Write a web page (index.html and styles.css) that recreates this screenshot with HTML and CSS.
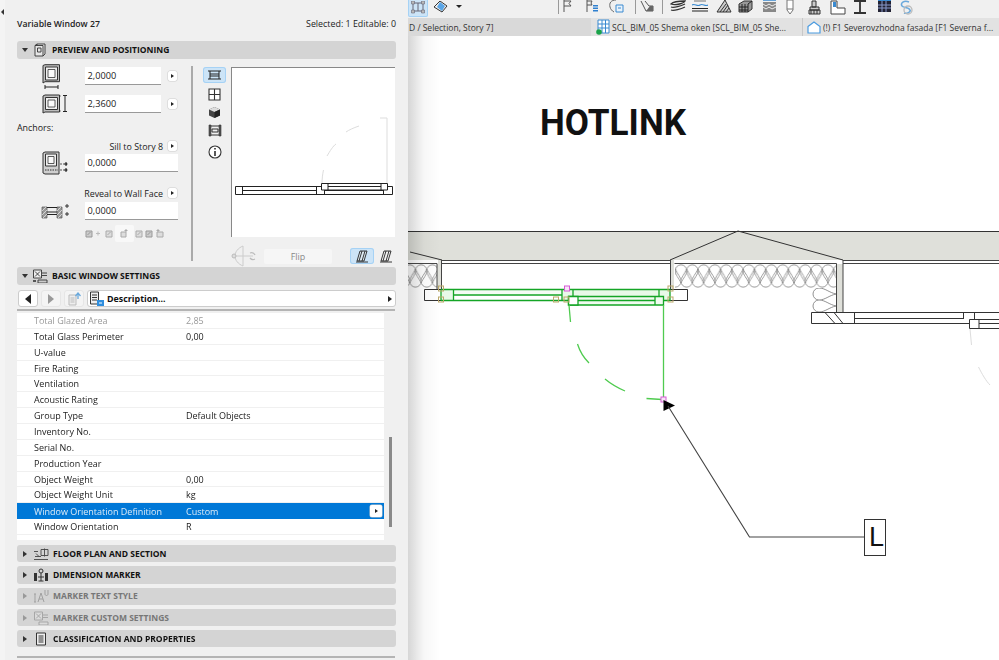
FILE: index.html
```html
<!DOCTYPE html>
<html lang="en">
<head>
<meta charset="utf-8">
<title>Variable Window 27</title>
<link rel="stylesheet" href="styles.css">
</head>
<body>
<div class="app">
  <aside class="panel">
    <div class="grip"><span class="grip-arrow"></span></div>
    <div class="panel-body">
      <header class="head"><span class="head-title">Variable Window 27</span><span>Selected: 1 Editable: 0</span></header>

      <div class="bar"><span class="tri-down"></span>
        <svg class="bar-icon" viewBox="0 0 14 14"><path d="M2 2.500 4 1h8v10l-2 2H2z M4 1v1.500M2 2.500h8V13M4.500 5h3.500v4H4.500z" fill="#e6e6e6" stroke="#333" stroke-width=".9"/></svg>
        <span class="bar-t">PREVIEW AND POSITIONING</span></div>

      <section class="pos">
        <div class="pos-left">
          <div class="row row-1">
            <div class="ico-cell"><svg width="19" height="25" viewBox="0 0 19 25"><path d="M1 1.500 3 .7h14.500v17H3L1 19z" fill="#bdbdbd" stroke="#333"/><path d="M3.500 3h12v13h-12z" fill="#f0f0f0" stroke="#333"/><path d="M6 5.500h7v8H6z" fill="#fafafa" stroke="#333" stroke-width=".8"/><path d="M3 23h13M3 21v4M16 21v4" stroke="#222" fill="none"/></svg></div>
            <div class="field narrow">2,0000</div><span class="arrow-btn"></span>
          </div>
          <div class="row row-2">
            <div class="ico-cell"><svg width="26" height="20" viewBox="0 0 26 20"><path d="M1 2 3 1h14.500v17H3l-2 1z" fill="#bdbdbd" stroke="#333"/><path d="M3.500 3.500h12v12h-12z" fill="#f0f0f0" stroke="#333"/><path d="M6 6h7v7H6z" fill="#fafafa" stroke="#333" stroke-width=".8"/><path d="M18 2h2M18 17h2" stroke="#888" stroke-dasharray="1 1"/><path d="M21 1.500h4M21 17.500h4M23 2v15" stroke="#222" fill="none"/></svg></div>
            <div class="field narrow">2,3600</div><span class="arrow-btn"></span>
          </div>
          <div class="anchors">Anchors:</div>
          <div class="lbl-row lbl-1"><span>Sill to Story 8</span><span class="arrow-btn"></span></div>
          <div class="row row-3">
            <div class="ico-cell"><svg width="27" height="24" viewBox="0 0 27 24"><path d="M1 2 3 1h14v22H3l-2-1z" fill="#cfcfcf" stroke="#333"/><path d="M3.500 3h11v12h-11z" fill="#f0f0f0" stroke="#333"/><path d="M6 5.500h6v7H6z" fill="#fafafa" stroke="#333" stroke-width=".8"/><path d="M3 19h13" stroke="#333" stroke-dasharray="1.500 1" fill="none"/><path d="M18 13h7M18 19h7" stroke="#555" stroke-dasharray="2 1"/><path d="M24 11v4M24 17v4M22.500 13h3M22.500 19h3" stroke="#111"/></svg></div>
            <div class="field">0,0000</div>
          </div>
          <div class="lbl-row lbl-2"><span>Reveal to Wall Face</span><span class="arrow-btn"></span></div>
          <div class="row row-4">
            <div class="ico-cell cell-wall"><svg width="28" height="16" viewBox="0 0 28 16"><path d="M1 4h5v11H1zM16 4h5v11h-5z" fill="#999" stroke="#555" stroke-width=".7"/><path d="M1 8l4-4M1 12l5-5M2 15l4-4M16 8l4-4M16 12l5-5M17 15l4-4" stroke="#eee" stroke-width=".7"/><path d="M6 4.500h10M6 11.500h10M6 9h10" stroke="#222" fill="none"/><path d="M26 1v4M24 3h4M26 9v4M24 11h4" stroke="#222" stroke-width=".9"/></svg></div>
            <div class="field">0,0000</div>
          </div>
          <div class="mini-row">
            <svg class="mini" viewBox="0 0 9 9"><path d="M1 2h6v6H1zM2.500 6l3-3" fill="#ccc" stroke="#999"/></svg>
            <svg class="mini" viewBox="0 0 9 9"><path d="M1 4.500h4M3 2.500v4" stroke="#bbb"/></svg>
            <svg class="mini" viewBox="0 0 9 9"><path d="M1 2h6v6H1zM2.500 6l3-3" fill="#ddd" stroke="#aaa"/></svg>
            <span class="mini-on"><svg class="mini" viewBox="0 0 9 9"><path d="M1 3h5v5H1z M6 0v3M4.500 1.500h3" fill="#ddd" stroke="#aaa"/></svg></span>
            <svg class="mini" viewBox="0 0 9 9"><path d="M1 2h6v6H1zM2.500 6l3-3" fill="#ddd" stroke="#aaa"/></svg>
            <svg class="mini" viewBox="0 0 9 9"><path d="M1 2h6v6H1zM2.500 6l3-3" fill="#ccc" stroke="#999"/></svg>
            <svg class="mini" viewBox="0 0 9 9"><path d="M2 3h6v5H2z M3 0v3M1.500 1.500h3" fill="#ddd" stroke="#aaa"/></svg>
          </div>
        </div>

        <div class="pos-tools">
          <span class="tool tool-on"><svg width="15" height="10" viewBox="0 0 15 10"><path d="M1 1h13M1 9h13M3 1v8M12 1v8M3 4h9M3 6h9" stroke="#222" fill="none"/></svg></span>
          <span class="tool"><svg width="13" height="13" viewBox="0 0 13 13"><path d="M1 1h11v11H1zM6.500 1v11M1 6.500h11" stroke="#333" stroke-width="1.100" fill="#fff"/></svg></span>
          <span class="tool"><svg width="13" height="13" viewBox="0 0 13 13"><path d="M6.500 1 12 3.500v6L6.500 12 1 9.500v-6z" fill="#444"/><path d="M6.500 1 12 3.500 6.500 6 1 3.500z" fill="#ddd"/><path d="M6.500 6v6L12 9.500v-6z" fill="#222"/></svg></span>
          <span class="tool"><svg width="14" height="13" viewBox="0 0 14 13"><path d="M1 1h2v11H1zM11 1h2v11h-2z" fill="#555" stroke="#333" stroke-width=".6"/><path d="M3 2h8M3 11h8M4 5h6v3H4z" stroke="#333" fill="#eee"/></svg></span>
          <span class="tool tool-info"><svg width="14" height="14" viewBox="0 0 14 14"><circle cx="7" cy="7" r="6" fill="#fff" stroke="#333" stroke-width="1.100"/><path d="M7 6v5M7 3v1.600" stroke="#222" stroke-width="1.500"/></svg></span>
        </div>

        <div class="pos-right">
          <div class="preview">
            <svg class="preview-svg" viewBox="231 67 164 170">
              <path d="M387 183V118h-7" fill="none" stroke="#ddd"/>
              <path d="M322 183c0-3 .500-9 1.500-13M327 156c3-5 6-10 9-12M346 132c3-2 7-4 13-6" fill="none" stroke="#ddd"/>
              <path d="M235.500 186.500h157v8h-157z" fill="#fff" stroke="#222"/>
              <path d="M242.500 186.500v8M316.500 186.500v8M324.500 190v4.500M383.500 190v4.500M242.500 190.500h74M325 190.500h58" stroke="#222" fill="none"/>
              <path d="M321.500 183.500h66v6.500h-66z" fill="#fff" stroke="#222"/>
              <path d="M328 183.500V190M381 183.500V190M328 186.500h53" stroke="#222" fill="none"/>
            </svg>
          </div>
          <div class="preview-foot">
            <svg width="28" height="22" viewBox="0 0 28 22"><path d="M13 1c-5 2-8 6-8 10s3 8 8 10V1zM3 11h20" fill="none" stroke="#ccc"/><circle cx="4" cy="11" r="2" fill="#ddd" stroke="#bbb"/><path d="M20 8a4 4 0 0 1 5 2M25 14a4 4 0 0 1-5-1" fill="none" stroke="#bbb" stroke-width="1.200"/></svg>
            <span class="flip">Flip</span>
            <span class="toggle toggle-on"><svg width="14" height="13" viewBox="0 0 14 13"><path d="M5 1h7L9 11H2zM7 1 4 11M10 1 7 11M1 12h12" fill="#ddeaf2" stroke="#222" stroke-width=".9"/></svg></span>
            <span class="toggle"><svg width="14" height="13" viewBox="0 0 14 13"><path d="M5 1h7L9 11H2zM7 1 4 11M10 1 7 11M1 12h12" fill="#f2f2f2" stroke="#222" stroke-width=".9"/></svg></span>
          </div>
        </div>
      </section>

      <div class="bar"><span class="tri-down"></span>
        <svg class="bar-icon wide" viewBox="0 0 16 14"><path d="M1.500 1h8v8h-8zM3 2.500l5 5M8 2.500l-5 5" fill="#eee" stroke="#333" stroke-width=".9"/><path d="M10 4h5M10 6.500h5M6 11h9v3H6z" stroke="#333" fill="#ccc" stroke-width=".9"/><path d="M1 11h3v2H1z" fill="#555"/></svg>
        <span class="bar-t">BASIC WINDOW SETTINGS</span></div>

      <nav class="nav">
        <span class="nav-btn"><span class="tri-left"></span></span>
        <span class="nav-btn off"><span class="tri-right"></span></span>
        <span class="nav-btn off"><svg width="15" height="14" viewBox="0 0 15 14"><path d="M2 3h7v10H2zM3.500 6h4M3.500 8h4M3.500 10h4" fill="#eee" stroke="#bbb"/><path d="M11 7V2M8.500 4 11 1l2.500 3" fill="none" stroke="#6aa9dc" stroke-width="1.300"/></svg></span>
        <div class="nav-select">
          <svg width="16" height="16" viewBox="0 0 16 16"><path d="M1.500 1h8v12h-8zM3 4h5M3 6.500h5M3 9h5" fill="#eee" stroke="#333"/><path d="M8 9h7v6H8z" fill="#2f8ede"/><path d="M10 12h3" stroke="#fff"/></svg>
          <span class="nav-text">Description...</span><span class="tri-right small"></span>
        </div>
      </nav>
      <div class="rule"></div>

      <div class="table-wrap">
        <div class="table">
          <div class="tr dim"><span class="td-l">Total Glazed Area</span><span>2,85</span></div>
          <div class="tr"><span class="td-l">Total Glass Perimeter</span><span>0,00</span></div>
          <div class="tr"><span class="td-l">U-value</span></div>
          <div class="tr"><span class="td-l">Fire Rating</span></div>
          <div class="tr"><span class="td-l">Ventilation</span></div>
          <div class="tr"><span class="td-l">Acoustic Rating</span></div>
          <div class="tr"><span class="td-l">Group Type</span><span>Default Objects</span></div>
          <div class="tr"><span class="td-l">Inventory No.</span></div>
          <div class="tr"><span class="td-l">Serial No.</span></div>
          <div class="tr"><span class="td-l">Production Year</span></div>
          <div class="tr"><span class="td-l">Object Weight</span><span>0,00</span></div>
          <div class="tr"><span class="td-l">Object Weight Unit</span><span>kg</span></div>
          <div class="tr sel"><span class="td-l">Window Orientation Definition</span><span>Custom</span><span class="arrow-btn sel-btn"></span></div>
          <div class="tr"><span class="td-l">Window Orientation</span><span>R</span></div>
        </div>
        <div class="scroll"></div>
      </div>

      <div class="stack">
        <div class="bar thin"><span class="tri-right bar-tri"></span>
          <svg class="bar-icon wide" viewBox="0 0 16 13"><path d="M1 4h4M1 12h14M2 9h6M8 2h7v6H8zM11.500 1v8M3 6l3 3" fill="none" stroke="#444" stroke-width=".9"/></svg>
          <span class="bar-t">FLOOR PLAN AND SECTION</span></div>
        <div class="bar thin"><span class="tri-right bar-tri"></span>
          <svg class="bar-icon wide" viewBox="0 0 16 14"><path d="M1 5h3v8H1zM12 5h3v8h-3z" fill="#333"/><circle cx="8" cy="3" r="2" fill="none" stroke="#333"/><path d="M8 5v8M5 9h6M5.500 13h5" stroke="#333"/></svg>
          <span class="bar-t">DIMENSION MARKER</span></div>
        <div class="bar thin off"><span class="tri-right bar-tri"></span>
          <svg class="bar-icon wide" viewBox="0 0 16 14"><path d="M1 5h2M2 5v8M1 13h2M5 13l3-9 3 9M6 10h4M12 1v4c0 2 3 2 3 0V1" fill="none" stroke="#999"/></svg>
          <span class="bar-t">MARKER TEXT STYLE</span></div>
        <div class="bar thin off"><span class="tri-right bar-tri"></span>
          <svg class="bar-icon wide" viewBox="0 0 16 14"><path d="M1.500 1h8v8h-8zM3 2.500l5 5M8 2.500l-5 5M10 4h5M10 6.500h5M6 11h9v3H6z" fill="#ddd" stroke="#999" stroke-width=".9"/></svg>
          <span class="bar-t">MARKER CUSTOM SETTINGS</span></div>
        <div class="bar thin"><span class="tri-right bar-tri"></span>
          <svg class="bar-icon" viewBox="0 0 14 14"><path d="M2.500 1h9v12h-9z" fill="#eee" stroke="#333"/><path d="M4.500 4h5M4.500 6h5M4.500 8h5M4.500 10h5" stroke="#333"/></svg>
          <span class="bar-t">CLASSIFICATION AND PROPERTIES</span></div>
      </div>
      <div class="rule end"></div>
    </div>
  </aside>

  <main class="main">
    <div class="toolbar">
      <span class="tb tb-on"><svg width="16" height="14" viewBox="0 0 16 14"><path d="M3 2h10M3 10h10M3 2v8M13 2v8M8 2v8" stroke="#667" fill="none"/><path d="M1.500 0h3v3h-3zM11.500 0h3v3h-3zM1.500 9h3v3h-3zM11.500 9h3v3h-3z" fill="#bbb" stroke="#667" stroke-width=".6"/></svg></span>
      <span class="tb g-diamond"><svg width="15" height="12" viewBox="0 0 15 12"><path d="M7 0 14 5 9 11 1 6z" fill="#eee" stroke="#333"/><path d="M7 1 4 6l5 4 3-5z" fill="#5aa5e6"/></svg></span>
      <span class="tb-caret"></span>
      <span class="tb-sep sep-a"></span>
      <span class="tb g-flag"><svg width="10" height="12" viewBox="0 0 10 12"><path d="M1 0v12M1 1h7l-2 2.500L8 6H1" fill="none" stroke="#555"/></svg></span>
      <span class="tb g-list"><svg width="13" height="12" viewBox="0 0 13 12"><path d="M1 0v12M1 1h5l-1 2 1 2H1" fill="none" stroke="#555"/><path d="M7 5h5v1.500H7zM7 7.500h5V9H7zM7 10h5v1.500H7z" fill="#2f80d0"/></svg></span>
      <span class="tb g-curve"><svg width="15" height="13" viewBox="0 0 15 13"><path d="M7 0C2 0 0 3 1 7c.500 2 2 4 4 5" fill="none" stroke="#666"/><path d="M7 5h7v7H7z" fill="#e8f2fb" stroke="#3a8ad0"/><path d="M9 8h3" stroke="#3a8ad0"/></svg></span>
      <span class="tb-sep sep-b"></span>
      <span class="tb g-hatch"><svg width="14" height="12" viewBox="0 0 14 12"><path d="M1 1l5 10h7V6M5 1l4 5h4" fill="none" stroke="#555"/><path d="M6 11l4-5h3v5z" fill="#666"/></svg></span>
      <span class="tb-sep sep-c"></span>
      <span class="tb g-1"><svg width="16" height="13" viewBox="0 0 16 13"><path d="M1 4c3-3 11-3 14-3-1 2-9 5-14 3zM1 7c3 1 10-1 14-3M1 10c3 1 10-1 14-3" fill="none" stroke="#333" stroke-width="1.300"/></svg></span>
      <span class="tb g-2"><svg width="16" height="12" viewBox="0 0 16 12"><path d="M0 8.500h16M0 11h16" stroke="#222"/><path d="M0 5c3-2 5 2 8 0s5 2 8 0" fill="none" stroke="#3a8ad0" stroke-width="1.200"/><path d="M2 1h12" stroke="#777"/></svg></span>
      <span class="tb g-3"><svg width="16" height="14" viewBox="0 0 16 14"><path d="M1 13 9 1l6 12z" fill="#ccc" stroke="#333"/><path d="M4 13l6-8M7 13l5-7M10 13l3-4" stroke="#333"/></svg></span>
      <span class="tb g-4"><svg width="15" height="13" viewBox="0 0 15 13"><path d="M1 4 6 1h8v8l-4 3H1z" fill="#999" stroke="#333"/><path d="M1 7h9M1 10h9M4 4v8M7 4v8M10 4v8M10 4l4-3" stroke="#222" fill="none"/></svg></span>
      <span class="tb g-5"><svg width="15" height="12" viewBox="0 0 15 12"><path d="M1 0h13" stroke="#3a8ad0" stroke-width="1.500"/><path d="M1 2h13v10H1z" fill="#888"/><path d="M1 4l3 2 3-2 3 2 4-2M1 7l3 2 3-2 3 2 4-2" fill="none" stroke="#eee"/></svg></span>
      <span class="tb g-6"><svg width="8" height="15" viewBox="0 0 8 15"><path d="M1 0h6v10l-3 4-3-4z" fill="#fff" stroke="#777"/><path d="M1 9h6" stroke="#777"/></svg></span>
      <span class="tb g-7"><svg width="13" height="15" viewBox="0 0 13 15"><path d="M4 1h4v6H4zM2 7h9v3H2zM1 10h11v4H1z" fill="#ccc" stroke="#333"/><path d="M3 10v4M6 10v4M9 10v4" stroke="#333"/></svg></span>
      <span class="tb g-8"><svg width="16" height="15" viewBox="0 0 16 15"><path d="M1 1h6v7h8v6H1z" fill="#fff" stroke="#444"/><path d="M3 2h3v5H3z" fill="#3a8ad0"/></svg></span>
      <span class="tb g-9"><svg width="14" height="14" viewBox="0 0 14 14"><path d="M1 1h12M1 13h12M7 1v12" stroke="#333" stroke-width="1.800" fill="none"/></svg></span>
      <span class="tb g-10"><svg width="15" height="14" viewBox="0 0 15 14"><path d="M1 2h13v11H1z" fill="#223"/><path d="M1 6h13M1 9h13M5 2v11M9 2v11" stroke="#89c" /><path d="M1 1h13" stroke="#3a8ad0" stroke-width="2"/></svg></span>
      <span class="tb g-11"><svg width="15" height="15" viewBox="0 0 15 15"><path d="M10 2C5 0 1 3 3 6c1 2 7 1 8 4 1 2-3 4-6 3" fill="none" stroke="#6aa9dc" stroke-width="1.600"/><circle cx="9" cy="10" r="4" fill="none" stroke="#bbb" stroke-width="1.300"/></svg></span>
    </div>
    <div class="tabs">
      <div class="tab tab-a">D / Selection, Story 7]</div>
      <div class="tab tab-b"><svg width="14" height="16" viewBox="0 0 14 16"><path d="M2 1h11v13H2zM2 5h11M2 9h11M6 1v13M9.500 1v13" fill="#fff" stroke="#3a8ad0"/><circle cx="3" cy="13" r="2.800" fill="#1aa34a"/></svg><span>SCL_BIM_05 Shema oken [SCL_BIM_05 She...</span></div>
      <div class="tab tab-c"><svg width="14" height="13" viewBox="0 0 14 13"><path d="M1 5.500 7 1l6 4.500V12H1z" fill="#fff" stroke="#4a9be0" stroke-width="1.200"/></svg><span>(!) F1 Severovzhodna fasada [F1 Severna f...</span></div>
    </div>
    <div class="canvas">
      <svg class="plan" viewBox="408 36 591 624">
        <defs>
          <pattern id="batt" width="11.300" height="24" patternUnits="userSpaceOnUse" x="3" y="264">
            <g fill="none" stroke="#858585" stroke-width=".8">
              <path d="M5.650 5C3.500 10 0 13 0 17.500a5.650 5.650 0 0 0 11.300 0C11.300 13 7.800 10 5.650 5z"/>
              <path d="M0 19C2.150 14 5.650 11 5.650 6.500A5.650 5.650 0 0 0-5.650 6.500C-5.650 11-2.150 14 0 19z"/>
              <path d="M11.300 19C13.450 14 16.950 11 16.950 6.500A5.650 5.650 0 0 0 5.650 6.500C5.650 11 9.150 14 11.300 19z"/>
            </g>
          </pattern>
          <pattern id="battv" width="24" height="12" patternUnits="userSpaceOnUse" x="812" y="288">
            <g fill="none" stroke="#858585" stroke-width=".9">
              <path d="M24 6C17 4.500 13 0 7 0a6 6 0 0 0 0 12C13 12 17 7.500 24 6z"/>
            </g>
          </pattern>
        </defs>

        <path d="M408 231.500H999V260H408z" fill="#dfe0da"/>
        <path d="M408 252V264H441V289H437V264H408zM670 264h4v25h-4zM836 264h7v48h-7z" fill="#dfe0da"/>
        <path d="M438 260h3v28h-3zM671 260h3v28h-3z" fill="#dfe0da"/>
        <path d="M408 231.500H999" stroke="#333" fill="none"/>
        <path d="M410 252 442 260M670 260 738 231M738 231 843 260" stroke="#333" fill="none"/>

        <rect x="408" y="264" width="29" height="24" fill="url(#batt)"/>
        <rect x="675" y="264" width="161" height="24" fill="url(#batt)"/>
        <rect x="812" y="288" width="24" height="24" fill="url(#battv)"/>
        <path d="M437 263.500V289M408 263.500H437M674.500 263.500H836.500V312" stroke="#333" fill="none" stroke-width=".9"/>
        <path d="M442 260.500H670M442 263.500H670M843 260.500H999M843 263.500H999M441.500 260V289M670.500 260V289M843 260V312" stroke="#444" fill="none"/>

        <path d="M424.500 289.500H687.500V300.500H424.500z" fill="#fff" stroke="#333"/>
        <path d="M441 289.500H670V300.500H441zM573 289.500H659V296H573z" fill="#e8f9e8"/>
        <path d="M453.500 295H562V300H453.500z" fill="#fff"/>
        <path d="M453.500 289.500H562V295H453.500z" fill="#f4fcf4"/>
        <path d="M441 289.500H670V300.500H441M453.500 289.500V300.500M562 289.500V300.500M573 289.500V296M659 289.500V296M670 289.500V300.500M441 289.500V300.500M453.500 295H562" fill="none" stroke="#14a526" stroke-width="1.300"/>
        <path d="M568.500 296.500H663.500V305H568.500z" fill="#f0fbf0" stroke="#14a526" stroke-width="1.300"/>
        <path d="M568.500 296.500h9.500v8.500h-9.500z" fill="#fff" stroke="#14a526" stroke-width="1.300"/>
        <path d="M655 296.500V305M578 300.500H655" fill="none" stroke="#14a526" stroke-width="1.300"/>
        <path d="M663.500 305V399M569 305 570.500 322M577.500 344C580 352 584 358 589 363M605 379C611 384 618 388 625 391M646.500 398.500 662 399.500" fill="none" stroke="#4fcb4f" stroke-width="1.300"/>

        <g class="h-tan"><rect x="438.500" y="286" width="5" height="5"/><rect x="438.500" y="297" width="5" height="5"/><rect x="553.500" y="297" width="5" height="5"/><rect x="564" y="297" width="5" height="5"/><rect x="668" y="286" width="5" height="5"/><rect x="668" y="297" width="5" height="5"/></g>
        <g class="h-pink"><rect x="564.500" y="286" width="5" height="5"/><rect x="661" y="397" width="5" height="5"/></g>

        <path d="M811.500 312.500H999M811.500 323.500H969M811.500 312.500V323.500M825 312.500 835 323.500M834 312.500 843 323.500M854.500 312.500V323.500M963.500 312.500V319M974.500 312.500V319M854.500 318.500H963" fill="none" stroke="#333"/>
        <path d="M969.500 319.500h9.500v9h-9.500z" fill="#fff" stroke="#333"/>
        <path d="M979 319.500H999M979 323.500H999M979 328.500H999" stroke="#333" fill="none"/>
        <path d="M970 329 971.500 345M978.500 367C982 374 986 381 990 385" stroke="#ddd" fill="none"/>

        <path d="M663.500 400V411L675 405.500z" fill="#000"/>
        <path d="M668 406 749.500 537H864.500" fill="none" stroke="#444" stroke-width="1.100"/>
        <rect x="864.500" y="519.500" width="21" height="36" fill="#fff" stroke="#333"/>
        <text class="tag" x="869" y="546">L</text>
        <text class="hot" x="540" y="134.500" textLength="146" lengthAdjust="spacingAndGlyphs">HOTLINK</text>
      </svg>
      <div class="shade"></div>
    </div>
  </main>
</div>
</body>
</html>
```
FILE: styles.css
```css
* { box-sizing: border-box; }
html, body { margin: 0; height: 100%; background: #fff; overflow: hidden; }
body { font-family: "Open Sans", "Noto Sans", sans-serif; font-size: 8.9px; color: #222; }
.app { display: flex; width: 999px; height: 660px; filter: blur(.3px); }

/* Panel */
.panel { display: flex; width: 408px; height: 660px; background: #f0f0f0; flex: none; }
.grip { width: 5px; background: #f4f4f4; flex: none; }
.grip-arrow { display: block; width: 0; height: 0; margin: 9px 0 0 1px; border: 3px solid transparent; border-left: 0; border-right: 3px solid #333; }
.panel-body { width: 379px; margin-left: 12px; }
.head { display: flex; justify-content: space-between; align-items: center; height: 41px; padding-top: 6px; }
.head-title { font-weight: 600; font-size: 8.700px; }

.bar { display: flex; align-items: center; height: 18px; background: #d4d4d4; border-radius: 3px; width: 379px; font-weight: 700; font-size: 8.500px; color: #111; padding-left: 5px; }
.bar-t { margin-top: -1px; }
.bar.thin { height: 17.300px; }
.bar.off { color: #777; }
.bar.off .bar-tri { border-left-color: #999; }
.bar.off .bar-icon { opacity: .85; }
.tri-down { width: 0; height: 0; border: 3.500px solid transparent; border-top: 4px solid #333; border-bottom: 0; flex: none; }
.tri-right { display: block; width: 0; height: 0; border: 4px solid transparent; border-left: 5px solid #555; border-right: 0; }
.tri-left { display: block; width: 0; height: 0; border: 5px solid transparent; border-right: 6px solid #222; border-left: 0; }
.bar-tri { border-width: 3.500px; border-left-width: 4px; border-left-color: #333; border-right-width: 0; margin-left: 1px; flex: none; }
.bar-icon { width: 14px; height: 14px; margin: 0 5px 0 5px; flex: none; }
.bar-icon.wide { width: 16px; margin: 0 4px 0 4px; }
.bar.thin .bar-icon { margin-left: 7px; }
.bar.thin .bar-icon.wide { margin-left: 6px; }

/* Preview and positioning */
.pos { display: flex; height: 208px; width: 379px; }
.pos-left { width: 174px; padding-top: 8px; flex: none; }
.row { display: flex; align-items: center; height: 18px; }
.row-2 { margin-top: 10px; }
.row-3 { margin-top: 3px; }
.row-4 { margin-top: 4px; }
.ico-cell { width: 68px; height: 18px; display: flex; align-items: center; padding-left: 25px; flex: none; }
.cell-wall { padding-left: 24px; }
.field { width: 93px; height: 18px; background: #fff; border-bottom: 1px solid #999; padding-left: 2.500px; line-height: 17px; font-size: 9.200px; }
.field.narrow { width: 76px; margin-right: 7px; }
.arrow-btn { display: flex; align-items: center; justify-content: center; width: 9px; height: 10px; background: #fff; border-radius: 2px; box-shadow: 0 0 0 .5px #ccc; flex: none; }
.arrow-btn::after { content: ""; border: 2.500px solid transparent; border-left: 3.500px solid #222; border-right: 0; }
.anchors { margin-top: 9px; height: 12px; line-height: 12px; }
.lbl-row { display: flex; align-items: center; justify-content: flex-end; gap: 5px; width: 160px; height: 10px; }
.lbl-1 { margin-top: 7px; }
.lbl-2 { margin-top: 16px; }
.mini-row { display: flex; align-items: center; gap: 1px; height: 17px; margin: 5px 0 0 68px; }
.mini { width: 9px; height: 9px; display: block; flex: none; }
.mini-on { display: flex; align-items: center; justify-content: center; width: 19px; height: 17px; background: #f8f8f8; border-radius: 2px; }

.pos-tools { width: 28px; margin-left: 12px; padding-top: 8px; display: flex; flex-direction: column; align-items: flex-start; flex: none; position: relative; }
.pos-tools::before { content: ""; position: absolute; left: -12.500px; top: 7px; width: 2px; height: 195px; background: #aaa; }
.tool { display: flex; align-items: center; justify-content: center; width: 23px; height: 16px; margin-bottom: 2px; }
.tool-on { background: #cce4f7; border-radius: 3px; box-shadow: inset 0 0 0 1px #a6d2f5; margin-bottom: 3px; }
.tool-info { margin-top: 4px; }
.pos-right { width: 164px; padding-top: 8px; flex: none; }
.preview { height: 170px; background: #fff; border-top: 1.500px solid #888; border-left: 1.500px solid #888; overflow: hidden; }
.preview-svg { display: block; width: 164px; height: 170px; margin: -1.500px 0 0 -1.500px; }
.preview-foot { display: flex; align-items: center; height: 26px; margin-top: 6px; margin-left: -1px; }
.flip { width: 68px; height: 15px; margin-left: 6px; line-height: 15px; text-align: center; background: #f6f6f6; border-radius: 2px; color: #888; }
.toggle { display: flex; align-items: center; justify-content: center; width: 24px; height: 16px; }
.toggle-on { margin-left: 18px; background: #cce4f7; border-radius: 3px; box-shadow: inset 0 0 0 1px #a6d2f5; }
.toggle + .toggle { margin-left: 4px; width: 15px; }

/* Nav */
.nav { display: flex; align-items: center; gap: 3px; height: 17px; margin-top: 5px; margin-left: 1px; width: 378px; }
.nav-btn { display: flex; align-items: center; justify-content: center; width: 20px; height: 17px; background: #fff; border: 1px solid #ccc; border-radius: 3px; }
.nav-btn.off { background: #f4f4f4; border-color: #e6e6e6; }
.nav-btn.off .tri-right { border-left-color: #999; border-width: 5px; border-left-width: 6px; border-right-width: 0; }
.nav-select { display: flex; align-items: center; flex: 1; height: 17px; background: #fff; border: 1px solid #ccc; border-radius: 3px; padding: 0 3px 0 1px; font-weight: 700; color: #111; }
.nav-text { flex: 1; margin-left: 2px; }
.tri-right.small { border-width: 3px; border-left-width: 4px; border-left-color: #222; border-right-width: 0; }
.rule { height: 2px; width: 378px; background: #b4b4b4; margin-top: 2px; }
.rule.end { margin-top: 9px; }

/* Table */
.table-wrap { display: flex; margin-top: 2px; height: 227px; }
.table { width: 367px; height: 227px; background: #fff; flex: none; font-size: 9px; }
.tr { display: flex; align-items: center; height: 15.860px; border-bottom: 1px solid #f0f0f0; position: relative; }
.td-l { width: 169px; padding-left: 17px; flex: none; }
.dim { color: #999; }
.sel { background: #0078d7; color: #dcebf8; border-bottom: 0; }
.sel-btn { position: absolute; right: 2px; top: 2px; width: 12px; height: 12px; }
.scroll { width: 3px; height: 90px; margin: 124px 0 0 5px; background: #8a8a8a; }
.stack { display: flex; flex-direction: column; gap: 4px; margin-top: 5px; }

/* Main */
.main { flex: 1; display: flex; flex-direction: column; min-width: 0; }
.toolbar { display: flex; align-items: center; height: 18px; background: #f0f0f0; overflow: hidden; }
.tb { display: flex; align-items: center; justify-content: center; flex: none; }
.tb-on { width: 20px; height: 18px; margin-top: -2px; background: #cce4f7; box-shadow: inset 0 0 0 1px #a6d2f5; border-radius: 0 0 2px 2px; }
.g-diamond { margin-left: 5px; margin-top: -4px; }
.tb-caret { width: 0; height: 0; margin: -6px 0 0 8px; border: 3px solid transparent; border-top: 3.500px solid #222; border-bottom: 0; }
.tb-sep { width: 1px; height: 14px; background: #999; margin-top: -4px; flex: none; }
.sep-a { margin-left: 96px; }
.g-flag { margin-left: 4px; margin-top: -6px; }
.g-list { margin-left: 13px; margin-top: -6px; }
.g-curve { margin-left: 10px; margin-top: -6px; }
.sep-b { margin-left: 11px; }
.g-hatch { margin-left: 4px; margin-top: -6px; }
.sep-c { margin-left: 8px; }
.g-1 { margin-left: 7px; margin-top: -6px; }
.g-2 { margin-left: 6px; margin-top: -6px; }
.g-3 { margin-left: 8px; margin-top: -6px; }
.g-4 { margin-left: 6px; margin-top: -6px; }
.g-5 { margin-left: 9px; margin-top: -6px; }
.g-6 { margin-left: 9px; margin-top: -4px; }
.g-7 { margin-left: 14px; margin-top: -4px; }
.g-8 { margin-left: 9px; margin-top: -4px; }
.g-9 { margin-left: 7px; margin-top: -4px; }
.g-10 { margin-left: 10px; margin-top: -6px; }
.g-11 { margin-left: 7px; margin-top: -4px; }
.tabs { display: flex; height: 18px; background: #d9d9d9; color: #333; font-size: 8.500px; }
.tab { display: flex; align-items: center; gap: 2px; height: 18px; white-space: nowrap; flex: none; }
.tab-a { width: 183px; padding-left: 1px; }
.tab-b { width: 211px; padding-left: 5px; background: #e2e2e2; }
.tab-c { flex: 1; padding-left: 4px; background: #e2e2e2; border-left: 1px solid #c8c8c8; }
.canvas { flex: 1; position: relative; background: #fff; min-height: 0; }
.plan { display: block; width: 591px; height: 624px; }
.shade { position: absolute; left: 0; top: 0; bottom: 0; width: 32px; background: linear-gradient(to right, rgba(0,0,0,.16), rgba(0,0,0,.03) 50%, rgba(0,0,0,0)); pointer-events: none; }
.hot { font-family: Roboto, "Liberation Sans", sans-serif; font-weight: 700; font-size: 37px; fill: #111; }
.tag { font-family: "Liberation Sans", sans-serif; font-size: 27px; fill: #111; }
.h-tan rect { fill: none; stroke: #bca96a; stroke-width: 1; }
.h-pink rect { fill: #f6e6f6; stroke: #d65ad6; stroke-width: 1; }
```
